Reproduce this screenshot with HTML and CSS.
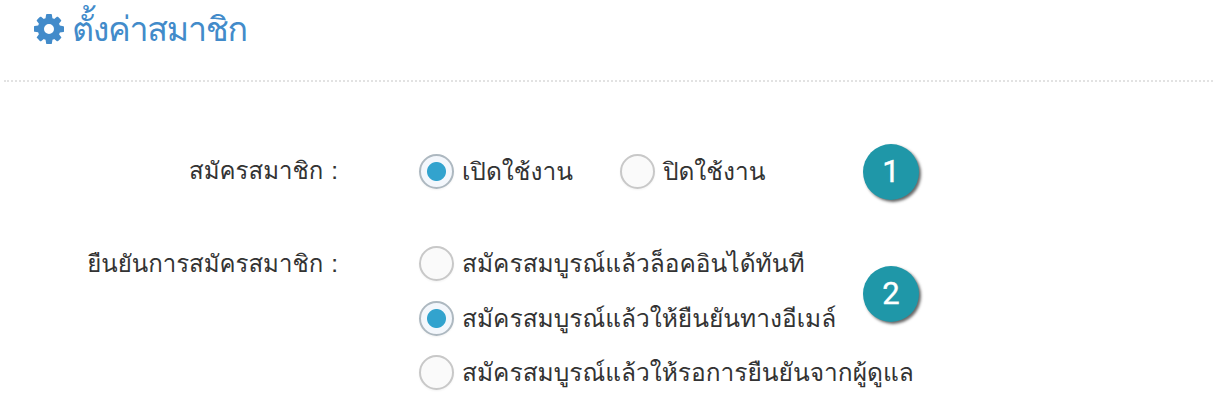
FILE: index.html
```
<!DOCTYPE html>
<html lang="th">
<head>
    <meta charset="UTF-8">
    <meta name="viewport" content="width=device-width, initial-scale=1.0">
    <title>ตั้งค่าสมาชิก</title>
    <link rel="stylesheet" href="styles.css">
</head>
<body>

    <!-- Page Header -->
    <header class="page-header">
        <svg class="icon-cog" viewBox="0 0 1536 1536" aria-hidden="true">
            <path d="M1024 768q0-106-75-181t-181-75-181 75-75 181 75 181 181 75 181-75 75-181zm512-109v222q0 12-8 23t-20 13l-185 28q-19 54-39 91 35 50 107 138 10 12 10 25t-9 23q-27 37-99 108t-94 71q-12 0-26-9l-138-108q-44 23-91 38-16 136-29 186-7 28-36 28H657q-14 0-24.500-8.500T621 1506l-28-184q-49-16-90-37l-141 107q-10 9-25 9-14 0-25-11-126-114-165-168-7-10-7-23 0-12 8-23 15-21 51-66.500t54-70.500q-27-50-41-99L29 913q-13-2-21-12.500T0 877V655q0-12 8-23t19-13l186-28q14-46 39-92-40-57-107-138-10-12-10-24 0-10 9-23 26-36 98.500-107.500T337 135q13 0 26 10l138 107q44-23 91-38 16-136 29-186 7-28 36-28h222q14 0 24.500 8.500T915 30l28 184q49 16 90 37l142-107q9-9 24-9 13 0 25 10 129 119 165 170 7 8 7 22 0 12-8 23-15 21-51 66.500t-54 70.500q26 50 41 98l183 28q13 2 21 12.500t8 23.500z"/>
        </svg>
        <h1>ตั้งค่าสมาชิก</h1>
    </header>

    <!-- Member Settings -->
    <form class="settings">
        <div class="form-row">
            <div class="form-label">สมัครสมาชิก :</div>
            <div class="options options-inline">
                <label class="option"><input type="radio" name="register" checked><span>เปิดใช้งาน</span></label>
                <label class="option"><input type="radio" name="register"><span>ปิดใช้งาน</span></label>
            </div>
            <span class="step">1</span>
        </div>
        <div class="form-row">
            <div class="form-label">ยืนยันการสมัครสมาชิก :</div>
            <div class="options">
                <label class="option"><input type="radio" name="confirm"><span>สมัครสมบูรณ์แล้วล็อคอินได้ทันที</span></label>
                <label class="option"><input type="radio" name="confirm" checked><span>สมัครสมบูรณ์แล้วให้ยืนยันทางอีเมล์</span></label>
                <label class="option"><input type="radio" name="confirm"><span>สมัครสมบูรณ์แล้วให้รอการยืนยันจากผู้ดูแล</span></label>
            </div>
            <span class="step step-lower">2</span>
        </div>
    </form>

</body>
</html>
```
FILE: styles.css
```
*, *::before, *::after {
    box-sizing: border-box;
    margin: 0;
    padding: 0;
}

body {
    font-family: Loma, 'Noto Sans Thai Looped', 'Noto Sans', sans-serif;
    font-size: 24.5px;
    color: #333;
    background: #fff;
}

/* Page Header */
.page-header {
    display: flex;
    align-items: center;
    gap: 8px;
    height: 82px;
    margin-left: 4px;
    padding: 0 0 22px 30px;
    border-bottom: 2px dotted #e2e2e2;
    color: #428bca;
}

.page-header h1 {
    font-size: 34px;
    font-weight: 400;
    letter-spacing: -1.3px;
    line-height: 58px;
    white-space: nowrap;
}

.icon-cog {
    width: 30px;
    height: 30px;
    fill: currentColor;
}

/* Form */
.settings {
    padding-top: 62px;
}

.form-row {
    display: grid;
    grid-template-columns: 338px 500px;
    column-gap: 81px;
    position: relative;
}

.form-row + .form-row {
    margin-top: 38px;
}

.form-label {
    font-size: 24px;
    line-height: 54px;
    text-align: right;
    white-space: nowrap;
}

.options {
    display: flex;
    flex-direction: column;
}

.options-inline {
    flex-direction: row;
    gap: 47px;
}

.option {
    display: flex;
    align-items: center;
    gap: 8px;
    height: 54.5px;
    white-space: nowrap;
}

.option input {
    appearance: none;
    width: 35px;
    height: 35px;
    border: 2px solid #c8c8c8;
    border-radius: 50%;
    background: #fafafa;
    box-shadow: 0 1px 2px rgba(0, 0, 0, 0.05);
}

.option input:checked {
    border-color: #adb8c0;
    background: radial-gradient(circle, #32a3ce 9px, #f3f7fc 10px);
}

/* Numbered markers over the form */
.step {
    position: absolute;
    left: 863px;
    top: 0;
    width: 56px;
    height: 56px;
    border-radius: 50%;
    background: #1f97a8;
    box-shadow: 2px 2px 3px rgba(0, 0, 0, 0.6);
    color: #fff;
    font-family: Roboto, sans-serif;
    font-size: 31px;
    font-weight: 400;
    line-height: 56px;
    text-align: center;
    -webkit-text-stroke: 0.4px #fff;
}

.step-lower {
    top: 29px;
}
```
